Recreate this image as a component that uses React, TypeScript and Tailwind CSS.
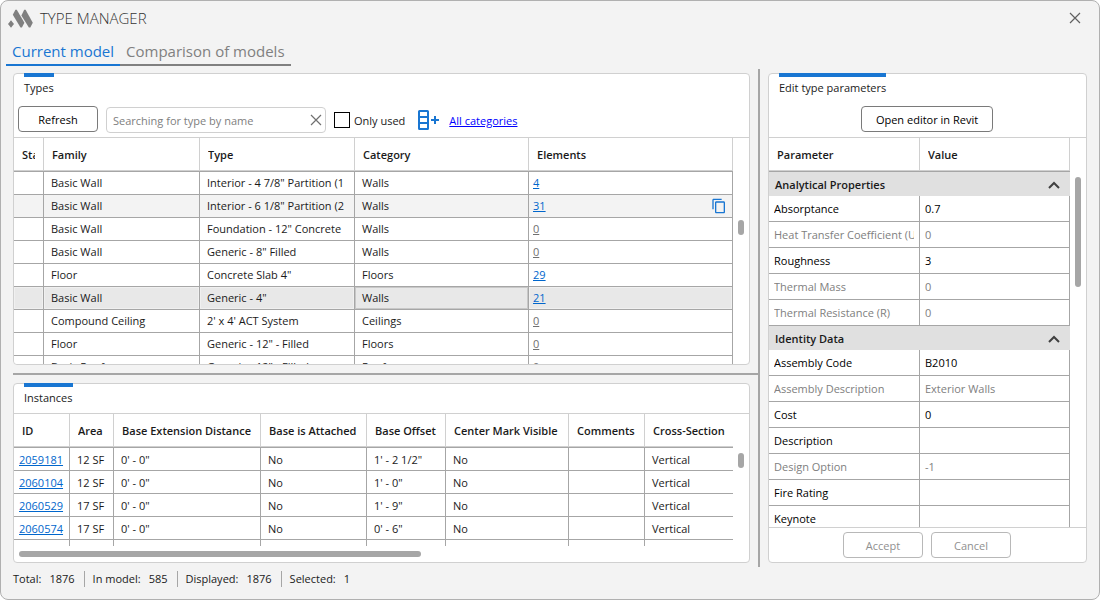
import React from 'react';
import { MdContentCopy } from 'react-icons/md';

const types = [
  { family: 'Basic Wall', type: 'Interior - 4 7/8" Partition (1', category: 'Walls', elements: 4 },
  { family: 'Basic Wall', type: 'Interior - 6 1/8" Partition (2', category: 'Walls', elements: 31, hovered: true },
  { family: 'Basic Wall', type: 'Foundation - 12" Concrete', category: 'Walls', elements: 0 },
  { family: 'Basic Wall', type: 'Generic - 8" Filled', category: 'Walls', elements: 0 },
  { family: 'Floor', type: 'Concrete Slab 4"', category: 'Floors', elements: 29 },
  { family: 'Basic Wall', type: 'Generic - 4"', category: 'Walls', elements: 21, selected: true },
  { family: 'Compound Ceiling', type: "2' x 4' ACT System", category: 'Ceilings', elements: 0 },
  { family: 'Floor', type: 'Generic - 12" - Filled', category: 'Floors', elements: 0 },
  { family: 'Basic Roof', type: 'Generic - 12" - Filled', category: 'Roofs', elements: 0 },
];

const instanceColumns = [
  { title: 'ID', width: 'w-[56px]' },
  { title: 'Area', width: 'w-[44px]' },
  { title: 'Base Extension Distance', width: 'w-[147px]' },
  { title: 'Base is Attached', width: 'w-[106px]' },
  { title: 'Base Offset', width: 'w-[79px]' },
  { title: 'Center Mark Visible', width: 'w-[123px]' },
  { title: 'Comments', width: 'w-[76px]' },
  { title: 'Cross-Section', width: '' },
];

const instances = [
  ['2059181', '12 SF', `0' - 0"`, 'No', `1' - 2 1/2"`, 'No', '', 'Vertical'],
  ['2060104', '12 SF', `0' - 0"`, 'No', `1' - 0"`, 'No', '', 'Vertical'],
  ['2060529', '17 SF', `0' - 0"`, 'No', `1' - 9"`, 'No', '', 'Vertical'],
  ['2060574', '17 SF', `0' - 0"`, 'No', `0' - 6"`, 'No', '', 'Vertical'],
  ['', '', '', '', '', '', '', ''],
];

const parameterGroups = [
  {
    title: 'Analytical Properties',
    rows: [
      { name: 'Absorptance', value: '0.7' },
      { name: 'Heat Transfer Coefficient (U', value: '0', readOnly: true },
      { name: 'Roughness', value: '3' },
      { name: 'Thermal Mass', value: '0', readOnly: true },
      { name: 'Thermal Resistance (R)', value: '0', readOnly: true },
    ],
  },
  {
    title: 'Identity Data',
    rows: [
      { name: 'Assembly Code', value: 'B2010' },
      { name: 'Assembly Description', value: 'Exterior Walls', readOnly: true },
      { name: 'Cost', value: '0' },
      { name: 'Description', value: '' },
      { name: 'Design Option', value: '-1', readOnly: true },
      { name: 'Fire Rating', value: '' },
      { name: 'Keynote', value: '' },
    ],
  },
];

const stats = [
  { label: 'Total:', value: 1876 },
  { label: 'In model:', value: 585 },
  { label: 'Displayed:', value: 1876 },
  { label: 'Selected:', value: 1 },
];

const HeaderCell = ({ title, className = '' }: { title: string; className?: string }) => (
  <th scope="col" className={`h-[33px] border-b border-[#d0d0d0] px-2 pt-[2px] pb-0 text-left font-semibold ${className}`}>
    <span className="block overflow-hidden whitespace-nowrap">{title}</span>
  </th>
);

const PanelTitle = ({ title }: { title: string }) => (
  <h2 className="-mt-px ml-[10px] self-start border-t-4 border-[#1976d2] pt-[3px] leading-4">{title}</h2>
);

const TypesPanel = () => (
  <section className="flex min-h-0 flex-1 flex-col rounded border border-[#d0d0d0] bg-white">
    <PanelTitle title="Types" />
    <div className="flex items-center px-1 pt-[10px] pb-[3px]">
      <button className="mb-[2px] h-[26px] w-20 rounded border border-[#7a7a7a] bg-white pt-[2px] text-black">Refresh</button>
      <div className="ml-2 flex h-[26px] w-[220px] items-center rounded border border-[#d0d0d0] pr-[3px] pl-[6px]">
        <input
          type="text"
          aria-label="Search types"
          placeholder="Searching for type by name"
          className="min-w-0 flex-1 pt-px outline-none placeholder:text-[#808080]"
        />
        <button aria-label="Clear search">
          <svg viewBox="0 0 12 12" className="h-3 w-3" fill="none" stroke="#707070" strokeWidth="1.2">
            <path d="M1 1l10 10M11 1L1 11" />
          </svg>
        </button>
      </div>
      <label className="ml-2 flex items-center gap-1">
        <input type="checkbox" className="h-4 w-4 appearance-none border border-black bg-white checked:bg-[#1976d2]" />
        <span className="pt-px">Only used</span>
      </label>
      <button aria-label="Add column" className="ml-[13px]">
        <svg viewBox="0 0 22 20" className="h-5 w-[22px]" fill="none" stroke="#1976d2" strokeWidth="2">
          <rect x="1" y="1" width="9" height="18" rx="0.5" />
          <path d="M1 7h9M1 13h9M13 10h8M17 6v8" />
        </svg>
      </button>
      <a href="#categories" className="ml-[9px] pt-px text-[#0000ff] underline">
        All categories
      </a>
    </div>
    <div className="flex min-h-0 flex-1 overflow-hidden rounded-b border-t border-[#d0d0d0]">
      <div className="min-w-0 flex-1 overflow-hidden">
        <table className="w-full table-fixed border-separate border-spacing-0">
          <thead>
            <tr>
              <HeaderCell title="State" className="w-[30px] border-r" />
              <HeaderCell title="Family" className="w-[156px] border-r" />
              <HeaderCell title="Type" className="w-[155px] border-r" />
              <HeaderCell title="Category" className="w-[174px] border-r" />
              <HeaderCell title="Elements" className="border-r" />
            </tr>
          </thead>
          <tbody className="[&_td]:h-[23px] [&_td]:border-r [&_td]:border-b [&_td]:border-[#a6a6a6] [&_td]:px-[7px] [&_td]:py-0 [&>tr:first-child>td]:h-6 [&>tr:first-child>td]:border-t">
            {types.map((row, i) => (
              <tr
                key={i}
                className={
                  row.selected
                    ? 'bg-[#e8e8e8] [&>td]:shadow-[inset_0_0_0_1px_#f0f0f0] [&>td:nth-child(4)]:shadow-[inset_0_0_0_1px_#c8c8c8]'
                    : row.hovered
                      ? 'bg-[#f3f3f3]'
                      : 'bg-white'
                }
              >
                <td />
                <td>{row.family}</td>
                <td>
                  <span className="block overflow-hidden whitespace-nowrap">{row.type}</span>
                </td>
                <td>{row.category}</td>
                <td className="!pr-[5px] !pl-1">
                  <div className="flex items-center justify-between">
                    <a href="#elements" className={row.elements ? 'text-[#0066cc] underline' : 'text-[#707070] underline'}>
                      {row.elements}
                    </a>
                    {row.hovered && (
                      <button aria-label="Copy">
                        <MdContentCopy className="h-4 w-4 text-[#1976d2]" />
                      </button>
                    )}
                  </div>
                </td>
              </tr>
            ))}
          </tbody>
        </table>
      </div>
      <div className="w-4 pt-[82px]">
        <div className="mx-auto h-[15px] w-[6px] rounded-full bg-[#a6a6a6]" />
      </div>
    </div>
  </section>
);

const InstancesPanel = () => (
  <section className="flex h-[180px] shrink-0 flex-col rounded border border-[#d0d0d0] bg-white">
    <PanelTitle title="Instances" />
    <div className="mt-[7px] flex min-h-0 flex-1 overflow-hidden border-t border-[#d0d0d0]">
      <div className="min-w-0 flex-1 overflow-hidden">
        <table className="w-full table-fixed border-separate border-spacing-0">
          <thead>
            <tr>
              {instanceColumns.map((col) => (
                <HeaderCell key={col.title} title={col.title} className={`${col.width} border-r last:border-r-0`} />
              ))}
            </tr>
          </thead>
          <tbody className="[&_td]:h-[23px] [&_td]:border-r [&_td]:border-b [&_td]:border-[#a6a6a6] [&_td]:px-[7px] [&_td]:pt-[2px] [&_td]:pb-0 [&_td]:whitespace-nowrap [&_td:last-child]:border-r-0 [&>tr:first-child>td]:h-6 [&>tr:first-child>td]:border-t">
            {instances.map((row, i) => (
              <tr key={i}>
                {row.map((cell, j) => (
                  <td key={j} className={j === 0 ? '!px-[5px]' : ''}>
                    {j === 0 && cell ? (
                      <a href={`#${cell}`} className="text-[#0066cc] underline">
                        {cell}
                      </a>
                    ) : (
                      cell
                    )}
                  </td>
                ))}
              </tr>
            ))}
          </tbody>
        </table>
      </div>
      <div className="w-4 pt-[39px]">
        <div className="mx-auto h-[15px] w-[6px] rounded-full bg-[#a6a6a6]" />
      </div>
    </div>
    <div className="flex h-4 shrink-0 items-center pr-3 pl-[5px]">
      <div className="h-[6px] w-[56%] rounded-full bg-[#a6a6a6]" />
    </div>
  </section>
);

const ParametersPanel = () => (
  <section className="flex w-[319px] shrink-0 flex-col rounded border border-[#d0d0d0] bg-white">
    <PanelTitle title="Edit type parameters" />
    <div className="flex justify-center pt-[10px] pr-px pb-[5px]">
      <button className="h-[26px] w-[132px] rounded border border-[#7a7a7a] bg-white pt-[2px] text-black">
        Open editor in Revit
      </button>
    </div>
    <div className="flex min-h-0 flex-1 overflow-hidden border-t border-[#d0d0d0]">
      <div className="min-w-0 flex-1 overflow-hidden">
        <table className="w-full table-fixed border-separate border-spacing-0">
          <thead>
            <tr>
              <HeaderCell title="Parameter" className="w-[151px] border-r" />
              <HeaderCell title="Value" className="border-r" />
            </tr>
          </thead>
          {parameterGroups.map((group, i) => (
            <tbody key={group.title}>
              <tr>
                <th
                  colSpan={2}
                  scope="rowgroup"
                  className={`bg-[#e0e0e0] pt-[2px] pr-[10px] pb-0 pl-[6px] text-left font-semibold ${i === 0 ? 'h-[25px] border-t border-[#a6a6a6]' : 'h-6'}`}
                >
                  <button className="flex w-full items-center justify-between">
                    {group.title}
                    <svg viewBox="0 0 12 8" className="h-2 w-3" fill="none" stroke="#404040" strokeWidth="2">
                      <path d="M1 7l5-5 5 5" />
                    </svg>
                  </button>
                </th>
              </tr>
              {group.rows.map((row) => (
                <tr key={row.name} className={row.readOnly ? 'text-[#808080]' : 'text-black'}>
                  <td className="h-[26px] border-r border-b border-[#a6a6a6] px-[5px] py-0">
                    <span className="block overflow-hidden whitespace-nowrap">{row.name}</span>
                  </td>
                  <td className="h-[26px] border-r border-b border-[#a6a6a6] px-[5px] py-0">{row.value}</td>
                </tr>
              ))}
            </tbody>
          ))}
        </table>
      </div>
      <div className="w-4 pt-[39px]">
        <div className="mx-auto h-[110px] w-[6px] rounded-full bg-[#a6a6a6]" />
      </div>
    </div>
    <div className="flex shrink-0 justify-center gap-2 border-t border-[#d0d0d0] py-1 pr-px">
      <button disabled className="h-[26px] w-20 rounded border border-[#b8b8b8] pt-[2px] text-[#909090]">Accept</button>
      <button disabled className="h-[26px] w-20 rounded border border-[#b8b8b8] pt-[2px] text-[#909090]">Cancel</button>
    </div>
  </section>
);

const App = () => (
  <div className="flex h-screen flex-col overflow-hidden rounded-lg border border-[#b0b0b0] bg-[#f3f3f3] font-['Open_Sans','Noto_Sans',sans-serif] text-[11px] leading-4 text-[#1a1a1a]">
    {/* Title bar */}
    <header className="flex h-[34px] shrink-0 items-center pr-[18px] pl-[7px]">
      <svg viewBox="0 0 25 19" className="h-[19px] w-[25px]" fill="#808080">
        <path d="M3 11.2l3 3.8-3 3.8-3-3.8z" />
        <path d="M7.4 0.8h1.4l7.6 13-2.5 4.8h-1.4L4.8 5.8z" />
        <path d="M16.2 0.8h1.4l7.2 13-2.5 4.8h-1.4L13.4 6.4z" />
      </svg>
      <h1 className="ml-[7px] flex-1 text-[15px] font-light text-[#333]">TYPE MANAGER</h1>
      <button aria-label="Close">
        <svg viewBox="0 0 12 12" className="h-3 w-3" fill="none" stroke="#606060" strokeWidth="1.2">
          <path d="M1 1l10 10M11 1L1 11" />
        </svg>
      </button>
    </header>

    {/* Tabs */}
    <nav className="flex h-[31px] shrink-0 pl-[5px] text-[15px] leading-5">
      <button className="border-b-2 border-[#1976d2] px-[6px] pt-[2px] text-[#1976d2]">Current model</button>
      <button className="border-b-2 border-[#808080] px-[6px] pt-[2px] text-[#808080]">Comparison of models</button>
    </nav>

    {/* Panels */}
    <main className="mt-[3px] flex min-h-0 flex-1 pr-3 pl-3">
      <div className="flex min-w-0 flex-1 flex-col pt-1 pb-1">
        <div className="flex min-h-0 flex-1 flex-col pr-2">
          <TypesPanel />
        </div>
        <div className="my-2 h-[2px] shrink-0 bg-[#a6a6a6]" />
        <div className="flex shrink-0 flex-col pr-2">
          <InstancesPanel />
        </div>
      </div>
      <div className="w-[2px] shrink-0 bg-[#a6a6a6]" />
      <div className="flex shrink-0 py-1 pl-2">
        <ParametersPanel />
      </div>
    </main>

    {/* Status bar */}
    <footer className="flex h-8 shrink-0 items-start pt-1 pl-3">
      {stats.map((item) => (
        <div key={item.label} className="mr-2 flex h-4 gap-2 border-r border-[#a6a6a6] pr-[9px] last:border-r-0">
          <span>{item.label}</span>
          <span>{item.value}</span>
        </div>
      ))}
    </footer>
  </div>
);

export default App;
